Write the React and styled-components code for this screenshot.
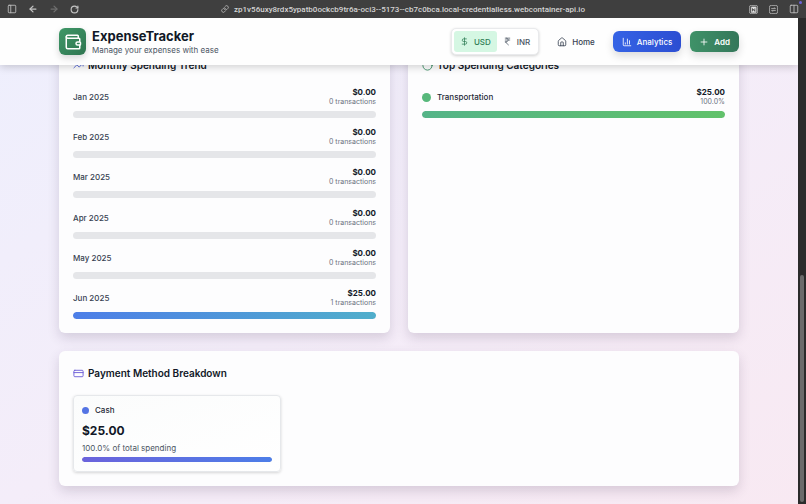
import styled, { createGlobalStyle } from 'styled-components';
import {
  PanelLeft, ArrowLeft, ArrowRight, RotateCw, Link, Columns2, Wallet, DollarSign,
  IndianRupee, House, ChartColumn, Plus, TrendingUp, Circle, CreditCard,
} from 'lucide-react';

const months = [
  { label: 'Jan 2025', amount: 0, count: 0 },
  { label: 'Feb 2025', amount: 0, count: 0 },
  { label: 'Mar 2025', amount: 0, count: 0 },
  { label: 'Apr 2025', amount: 0, count: 0 },
  { label: 'May 2025', amount: 0, count: 0 },
  { label: 'Jun 2025', amount: 25, count: 1 },
];

const maxAmount = Math.max(...months.map((m) => m.amount));
const money = (value) => `$${value.toFixed(2)}`;

const GlobalStyle = createGlobalStyle`
  * {
    box-sizing: border-box;
  }

  body {
    margin: 0;
    font-family: Inter, 'Liberation Sans', sans-serif;
    font-size: 8px;
    color: #111827;
    background-color: #2b2b2b;
  }

  h1, h2, p {
    margin: 0;
  }

  button {
    font: inherit;
    border: 0;
    padding: 0;
    cursor: pointer;
  }

  svg {
    flex: none;
    display: block;
  }
`;

const Window = styled.div`
  display: flex;
  flex-direction: column;
  height: 100vh;
  overflow: hidden;
`;

const Toolbar = styled.div`
  display: flex;
  align-items: center;
  justify-content: space-between;
  flex: none;
  height: 18px;
  padding: 0 7px;
  background-color: #3f3f3f;
`;

const ToolGroup = styled.div`
  display: flex;
  flex: 1;
  align-items: center;
  gap: 11px;
  justify-content: ${({ $end }) => ($end ? 'flex-end' : 'flex-start')};
`;

const ToolButton = styled.button`
  position: relative;
  background: none;
  color: ${({ disabled }) => (disabled ? '#6f6f6f' : '#c4c4c4')};
`;

const NoticeDot = styled.span`
  position: absolute;
  top: -3px;
  right: -3px;
  width: 3px;
  height: 3px;
  border-radius: 50%;
  background-color: #6d63d8;
`;

const Address = styled.div`
  display: flex;
  align-items: center;
  gap: 5px;
  color: #d4d4d4;
  font-family: Roboto, 'Liberation Sans', sans-serif;
  font-weight: 500;
  white-space: nowrap;
`;

const Viewport = styled.div`
  display: flex;
  flex: 1;
  min-height: 0;
`;

const Page = styled.div`
  flex: 1;
  min-width: 0;
  overflow: hidden;
  background: linear-gradient(to bottom right, #eeeffd, #f4edf9 50%, #f8e9f2);
`;

const ScrollTrack = styled.div`
  display: flex;
  flex-direction: column;
  justify-content: flex-end;
  width: 8px;
  padding: 2px;
  background-color: #2b2b2b;
`;

const ScrollThumb = styled.div`
  height: 47%;
  border-radius: 2px;
  background-color: #6b6b6b;
`;

const Header = styled.header`
  position: relative;
  z-index: 1;
  display: flex;
  align-items: center;
  justify-content: space-between;
  height: 47px;
  padding: 0 59px;
  background-color: #fefefe;
  box-shadow: 0 2px 8px rgba(0, 0, 0, 0.18);
`;

const Brand = styled.div`
  display: flex;
  align-items: center;
  gap: 6px;
`;

const Logo = styled.div`
  display: flex;
  align-items: center;
  justify-content: center;
  width: 27px;
  height: 27px;
  border-radius: 6px;
  color: #fff;
  background: linear-gradient(to bottom right, #3f9868, #2f7550);
  box-shadow: 0 3px 7px rgba(0, 0, 0, 0.16);
`;

const BrandName = styled.h1`
  font-size: 13px;
  line-height: 16px;
  font-weight: 700;
`;

const Tagline = styled.p`
  color: #4b5563;
  line-height: 12px;
`;

const Nav = styled.nav`
  display: flex;
  align-items: center;
  gap: 9px;
`;

const CurrencySwitch = styled.div`
  display: flex;
  padding: 2px;
  border: 1px solid #e9eaec;
  border-radius: 5px;
  background-color: #fff;
  box-shadow: 0 1px 3px rgba(0, 0, 0, 0.18);
`;

const CurrencyButton = styled.button`
  display: flex;
  align-items: center;
  gap: 5px;
  height: 21px;
  padding: 0 6px;
  border-radius: 3px;
  font-weight: 500;
  color: ${({ $active }) => ($active ? '#2f7d55' : '#4b5563')};
  background-color: ${({ $active }) => ($active ? '#d5f7e3' : 'transparent')};
`;

const NavLink = styled.a`
  display: flex;
  align-items: center;
  gap: 5px;
  height: 21px;
  padding: 0 9px;
  border-radius: 6px;
  font-weight: 500;
  text-decoration: none;
  color: ${({ $active }) => ($active ? '#fff' : '#374151')};
  background: ${({ $active }) => ($active ? 'linear-gradient(to right, #3563e5, #2c4ed2)' : 'none')};
  box-shadow: ${({ $active }) => ($active ? '0 4px 8px rgba(0, 0, 0, 0.14)' : 'none')};
`;

const AddButton = styled.button`
  display: flex;
  align-items: center;
  gap: 5px;
  height: 21px;
  padding: 0 9px;
  border-radius: 6px;
  font-weight: 600;
  color: #fff;
  background: linear-gradient(to right, #3f9268, #34775a);
  box-shadow: 0 4px 8px rgba(0, 0, 0, 0.14);
`;

/* Scrolled content, its first row is partly under the header */
const Content = styled.main`
  display: grid;
  grid-template-columns: 1fr 1fr;
  gap: 18px;
  margin-top: -22px;
  padding: 0 59px 18px;
`;

const Card = styled.section`
  grid-column: ${({ $wide }) => ($wide ? '1 / -1' : 'auto')};
  padding: 14px;
  border-radius: 6px;
  background-color: #fdfdfe;
  box-shadow: 0 5px 12px rgba(60, 40, 80, 0.17);
`;

const CardTitle = styled.h2`
  display: flex;
  align-items: center;
  gap: 4px;
  margin-bottom: 14px;
  font-size: 10px;
  line-height: 16px;
  font-weight: 600;

  & svg {
    color: ${({ $tint }) => $tint};
  }
`;

const List = styled.div`
  display: flex;
  flex-direction: column;
  justify-content: space-between;
  min-height: 232px;
`;

const RowHead = styled.div`
  display: flex;
  align-items: center;
  justify-content: space-between;
  margin-bottom: 4px;
`;

const RowLabel = styled.span`
  display: flex;
  align-items: center;
  gap: 6px;
  line-height: 10px;
  font-weight: 500;
  color: ${({ $dark }) => ($dark ? '#1f2937' : '#374151')};
`;

const Figures = styled.div`
  text-align: right;
`;

const Amount = styled.p`
  line-height: 10px;
  font-weight: 700;
`;

const Note = styled.p`
  font-size: 7px;
  line-height: 10px;
  color: #6b7280;
`;

const Dot = styled.span`
  width: ${({ $size }) => $size}px;
  height: ${({ $size }) => $size}px;
  border-radius: 50%;
  background-color: ${({ $color }) => $color};
`;

const Track = styled.div`
  height: ${({ $thin }) => ($thin ? 5 : 7)}px;
  border-radius: 4px;
  overflow: hidden;
  background-color: #e5e6e9;
`;

const Fill = styled.div`
  height: 100%;
  border-radius: 4px;
  background: linear-gradient(to right, ${({ $from }) => $from}, ${({ $to }) => $to});
`;

const Methods = styled.div`
  display: grid;
  grid-template-columns: repeat(3, 1fr);
  gap: 14px;
`;

const Method = styled.div`
  padding: 9px 8px;
  border: 1px solid #e6e8eb;
  border-radius: 4px;
  background: linear-gradient(to bottom right, #fbfcfc, #fff);
  box-shadow: 0 1px 3px rgba(0, 0, 0, 0.16);
`;

const MethodTotal = styled.p`
  margin: 8px 0 4px;
  font-size: 12px;
  line-height: 16px;
  font-weight: 700;
`;

const MethodShare = styled.p`
  margin-bottom: 4px;
  line-height: 10px;
  color: #4b5563;
`;

const NotionIcon = () => (
  <svg width="9" height="9" viewBox="0 0 24 24" fill="none" stroke="currentColor" strokeWidth="2">
    <rect x="1" y="1" width="22" height="22" rx="5" />
    <rect x="6" y="5" width="13" height="15" rx="1" fill="#ededed" />
    <path d="M9.500 17V9.500l6 7.500V9" stroke="#222" />
  </svg>
);

const SwapIcon = () => (
  <svg width="9" height="9" viewBox="0 0 24 24" fill="none" stroke="currentColor" strokeWidth="2">
    <rect x="1" y="1" width="22" height="22" rx="5" />
    <path d="M6 9.500h11M14 6.500l3 3M18 14.500H7M10 17.500l-3-3" />
  </svg>
);

const MonthRow = ({ month }) => (
  <div>
    <RowHead>
      <RowLabel>{month.label}</RowLabel>
      <Figures>
        <Amount>{money(month.amount)}</Amount>
        <Note>{month.count} transactions</Note>
      </Figures>
    </RowHead>
    <Track>
      <Fill $from="#4d7ee8" $to="#50aecb" style={{ width: `${(month.amount / maxAmount) * 100}%` }} />
    </Track>
  </div>
);

export default function App() {
  return (
    <Window>
      <GlobalStyle />
      <Toolbar>
        <ToolGroup>
          <ToolButton aria-label="Sidebar"><PanelLeft size={10} /></ToolButton>
          <ToolButton aria-label="Back"><ArrowLeft size={10} strokeWidth={3} /></ToolButton>
          <ToolButton aria-label="Forward" disabled><ArrowRight size={10} strokeWidth={3} /></ToolButton>
          <ToolButton aria-label="Reload"><RotateCw size={9} strokeWidth={3} /></ToolButton>
        </ToolGroup>
        <Address>
          <Link size={8} />
          <span>zp1v56uxy8rdx5ypatb0ockcb9tr6a-oci3--5173--cb7c0bca.local-credentialless.webcontainer-api.io</span>
        </Address>
        <ToolGroup $end>
          <ToolButton aria-label="Notes"><NotionIcon /></ToolButton>
          <ToolButton aria-label="Switch"><SwapIcon /></ToolButton>
          <ToolButton aria-label="Split view"><Columns2 size={10} /><NoticeDot /></ToolButton>
        </ToolGroup>
      </Toolbar>
      <Viewport>
        <Page>
          <Header>
            <Brand>
              <Logo><Wallet size={18} /></Logo>
              <div>
                <BrandName>ExpenseTracker</BrandName>
                <Tagline>Manage your expenses with ease</Tagline>
              </div>
            </Brand>
            <Nav>
              <CurrencySwitch>
                <CurrencyButton $active><DollarSign size={9} />USD</CurrencyButton>
                <CurrencyButton><IndianRupee size={9} />INR</CurrencyButton>
              </CurrencySwitch>
              <NavLink href="#home"><House size={10} />Home</NavLink>
              <NavLink href="#analytics" $active><ChartColumn size={10} />Analytics</NavLink>
              <AddButton><Plus size={10} />Add</AddButton>
            </Nav>
          </Header>
          <Content>
            <Card>
              <CardTitle $tint="#4f63d8"><TrendingUp size={11} />Monthly Spending Trend</CardTitle>
              <List>
                {months.map((month) => <MonthRow key={month.label} month={month} />)}
              </List>
            </Card>
            <Card>
              <CardTitle $tint="#3f9268"><Circle size={11} />Top Spending Categories</CardTitle>
              <RowHead>
                <RowLabel $dark><Dot $size={9} $color="#57b87b" />Transportation</RowLabel>
                <Figures>
                  <Amount>$25.00</Amount>
                  <Note>100.0%</Note>
                </Figures>
              </RowHead>
              <Track>
                <Fill $from="#55b488" $to="#62c26b" style={{ width: '100%' }} />
              </Track>
            </Card>
            <Card $wide>
              <CardTitle $tint="#6a5bd6"><CreditCard size={11} />Payment Method Breakdown</CardTitle>
              <Methods>
                <Method>
                  <RowLabel $dark><Dot $size={7} $color="#5474e4" />Cash</RowLabel>
                  <MethodTotal>$25.00</MethodTotal>
                  <MethodShare>100.0% of total spending</MethodShare>
                  <Track $thin>
                    <Fill $from="#6b63dc" $to="#4d7ee8" style={{ width: '100%' }} />
                  </Track>
                </Method>
              </Methods>
            </Card>
          </Content>
        </Page>
        <ScrollTrack>
          <ScrollThumb />
        </ScrollTrack>
      </Viewport>
    </Window>
  );
}
